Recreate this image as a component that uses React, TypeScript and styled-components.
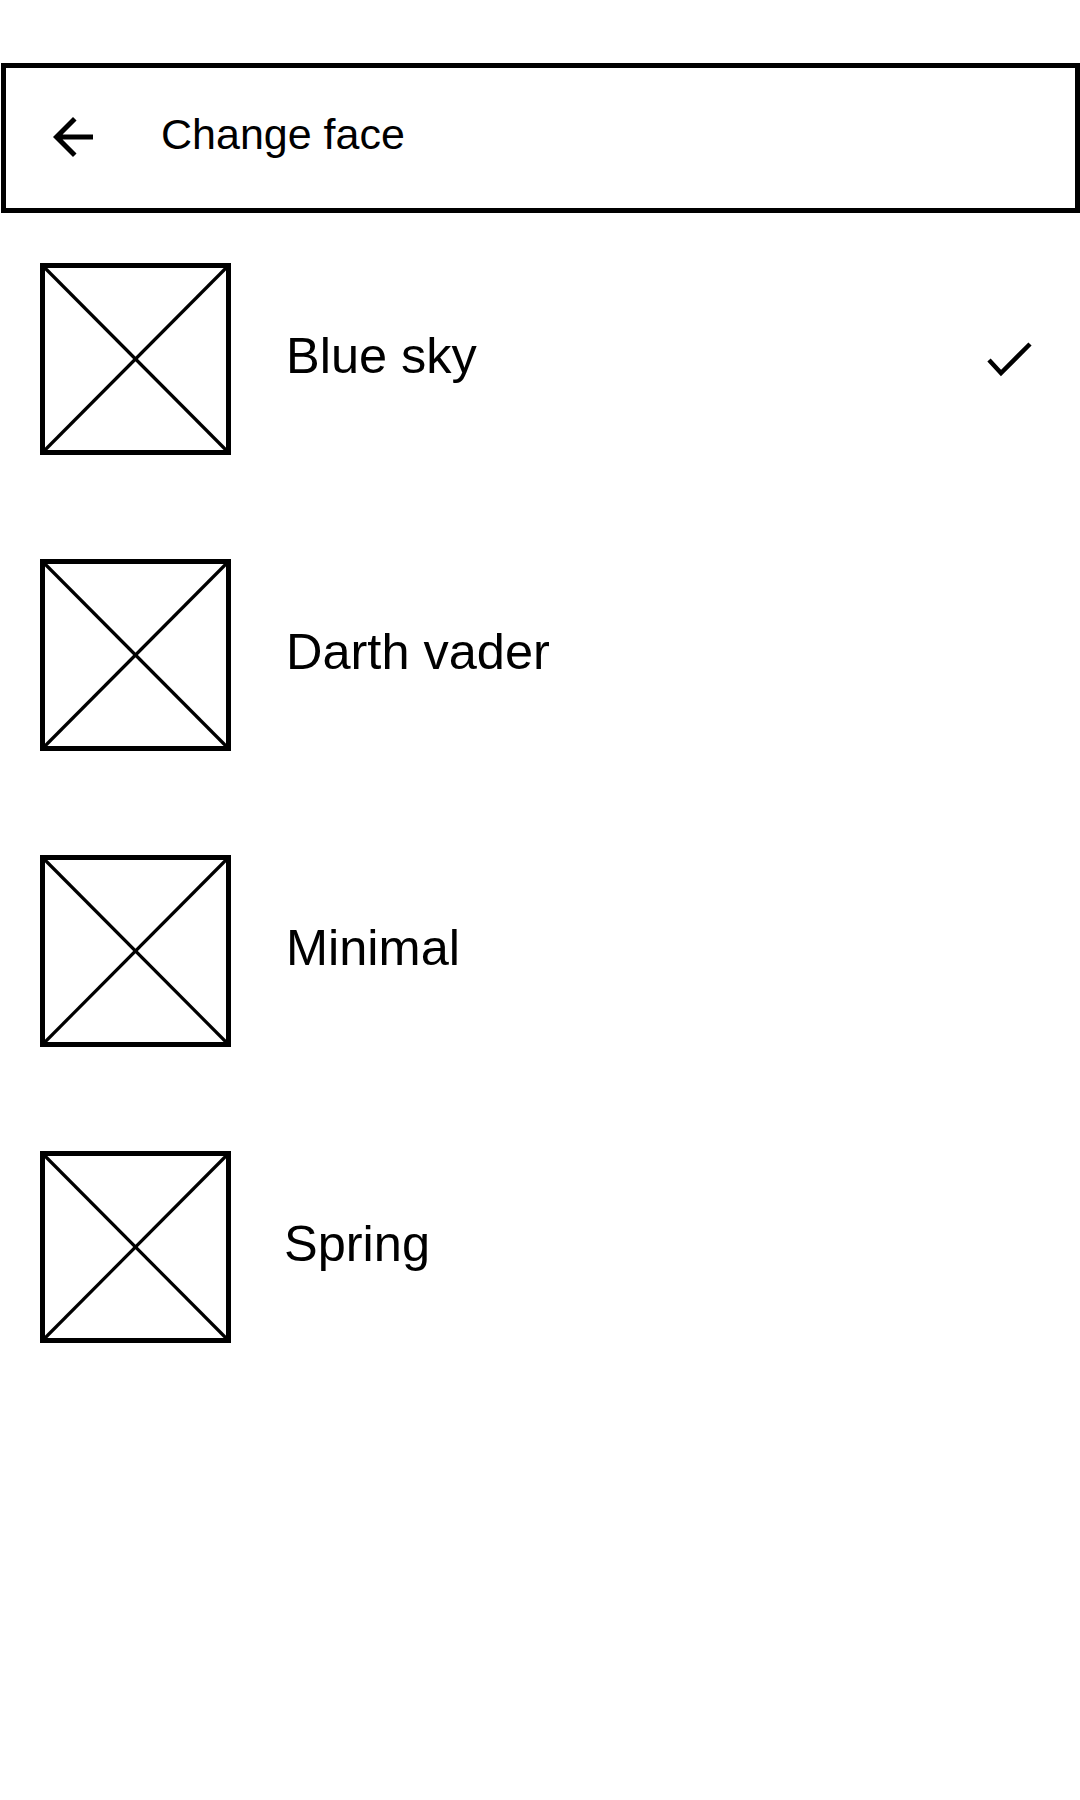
import React from "react";
import styled, { createGlobalStyle } from "styled-components";

const GlobalStyle = createGlobalStyle`
  html, body {
    margin: 0;
    padding: 0;
    background: #ffffff;
  }
  body {
    font-family: "Liberation Sans", Arial, sans-serif;
    color: #000000;
  }
`;

const Page = styled.div`
  width: 1080px;
  min-height: 1800px;
  padding-top: 63px;
  box-sizing: border-box;
  background: #ffffff;
`;

const Header = styled.header`
  margin-left: 1px;
  width: 1079px;
  height: 150px;
  box-sizing: border-box;
  border: 5px solid #000;
  display: flex;
  align-items: center;
  padding-left: 37px;
`;

const BackButton = styled.button`
  width: 60px;
  height: 60px;
  padding: 0;
  border: none;
  background: transparent;
  display: flex;
  align-items: center;
  justify-content: center;
  margin-right: 58px;
  margin-top: -2px;
  cursor: pointer;
`;

const Title = styled.h1`
  margin: 0;
  font-size: 43px;
  font-weight: 400;
  line-height: 1;
  margin-top: -8px;
`;

const List = styled.ul`
  list-style: none;
  margin: 50px 0 0 0;
  padding: 0 0 0 40px;
  display: flex;
  flex-direction: column;
  gap: 104px;
`;

const Row = styled.li`
  display: flex;
  align-items: center;
  height: 192px;
  padding-right: 46px;
`;

const Thumb = styled.svg`
  flex: none;
  width: 191px;
  height: 192px;
  display: block;
`;

const Label = styled.span<{ $shift?: number }>`
  flex: 1;
  margin-left: ${(p) => 55 + (p.$shift ?? 0)}px;
  font-size: 50.5px;
  line-height: 1;
  margin-top: -5px;
`;

const Check = styled.svg`
  flex: none;
  width: 48px;
  height: 38px;
  margin-top: 2px;
`;

const Placeholder = () => (
  <Thumb viewBox="0 0 191 192">
    <rect x="2.5" y="2.5" width="186" height="187" fill="#fff" stroke="#000" strokeWidth="5" />
    <line x1="3" y1="3" x2="188" y2="189" stroke="#000" strokeWidth="3.2" />
    <line x1="188" y1="3" x2="3" y2="189" stroke="#000" strokeWidth="3.2" />
  </Thumb>
);

const faces = [
  { name: "Blue sky", selected: true, shift: 0 },
  { name: "Darth vader", selected: false, shift: 0 },
  { name: "Minimal", selected: false, shift: 0 },
  { name: "Spring", selected: false, shift: -2 },
];

export default function App() {
  return (
    <>
      <GlobalStyle />
      <Page>
        <Header>
          <BackButton aria-label="Back">
            <svg width="60" height="60" viewBox="0 0 24 24">
              <path
                d="M20 11H7.83l5.59-5.59L12 4l-8 8 8 8 1.41-1.41L7.83 13H20v-2z"
                fill="#000"
              />
            </svg>
          </BackButton>
          <Title>Change face</Title>
        </Header>
        <List>
          {faces.map((f) => (
            <Row key={f.name}>
              <Placeholder />
              <Label $shift={f.shift}>{f.name}</Label>
              {f.selected && (
                <Check viewBox="0 0 48 38">
                  <polyline
                    points="3,19 15,32 44,3"
                    fill="none"
                    stroke="#000"
                    strokeWidth="4.5"
                  />
                </Check>
              )}
            </Row>
          ))}
        </List>
      </Page>
    </>
  );
}
